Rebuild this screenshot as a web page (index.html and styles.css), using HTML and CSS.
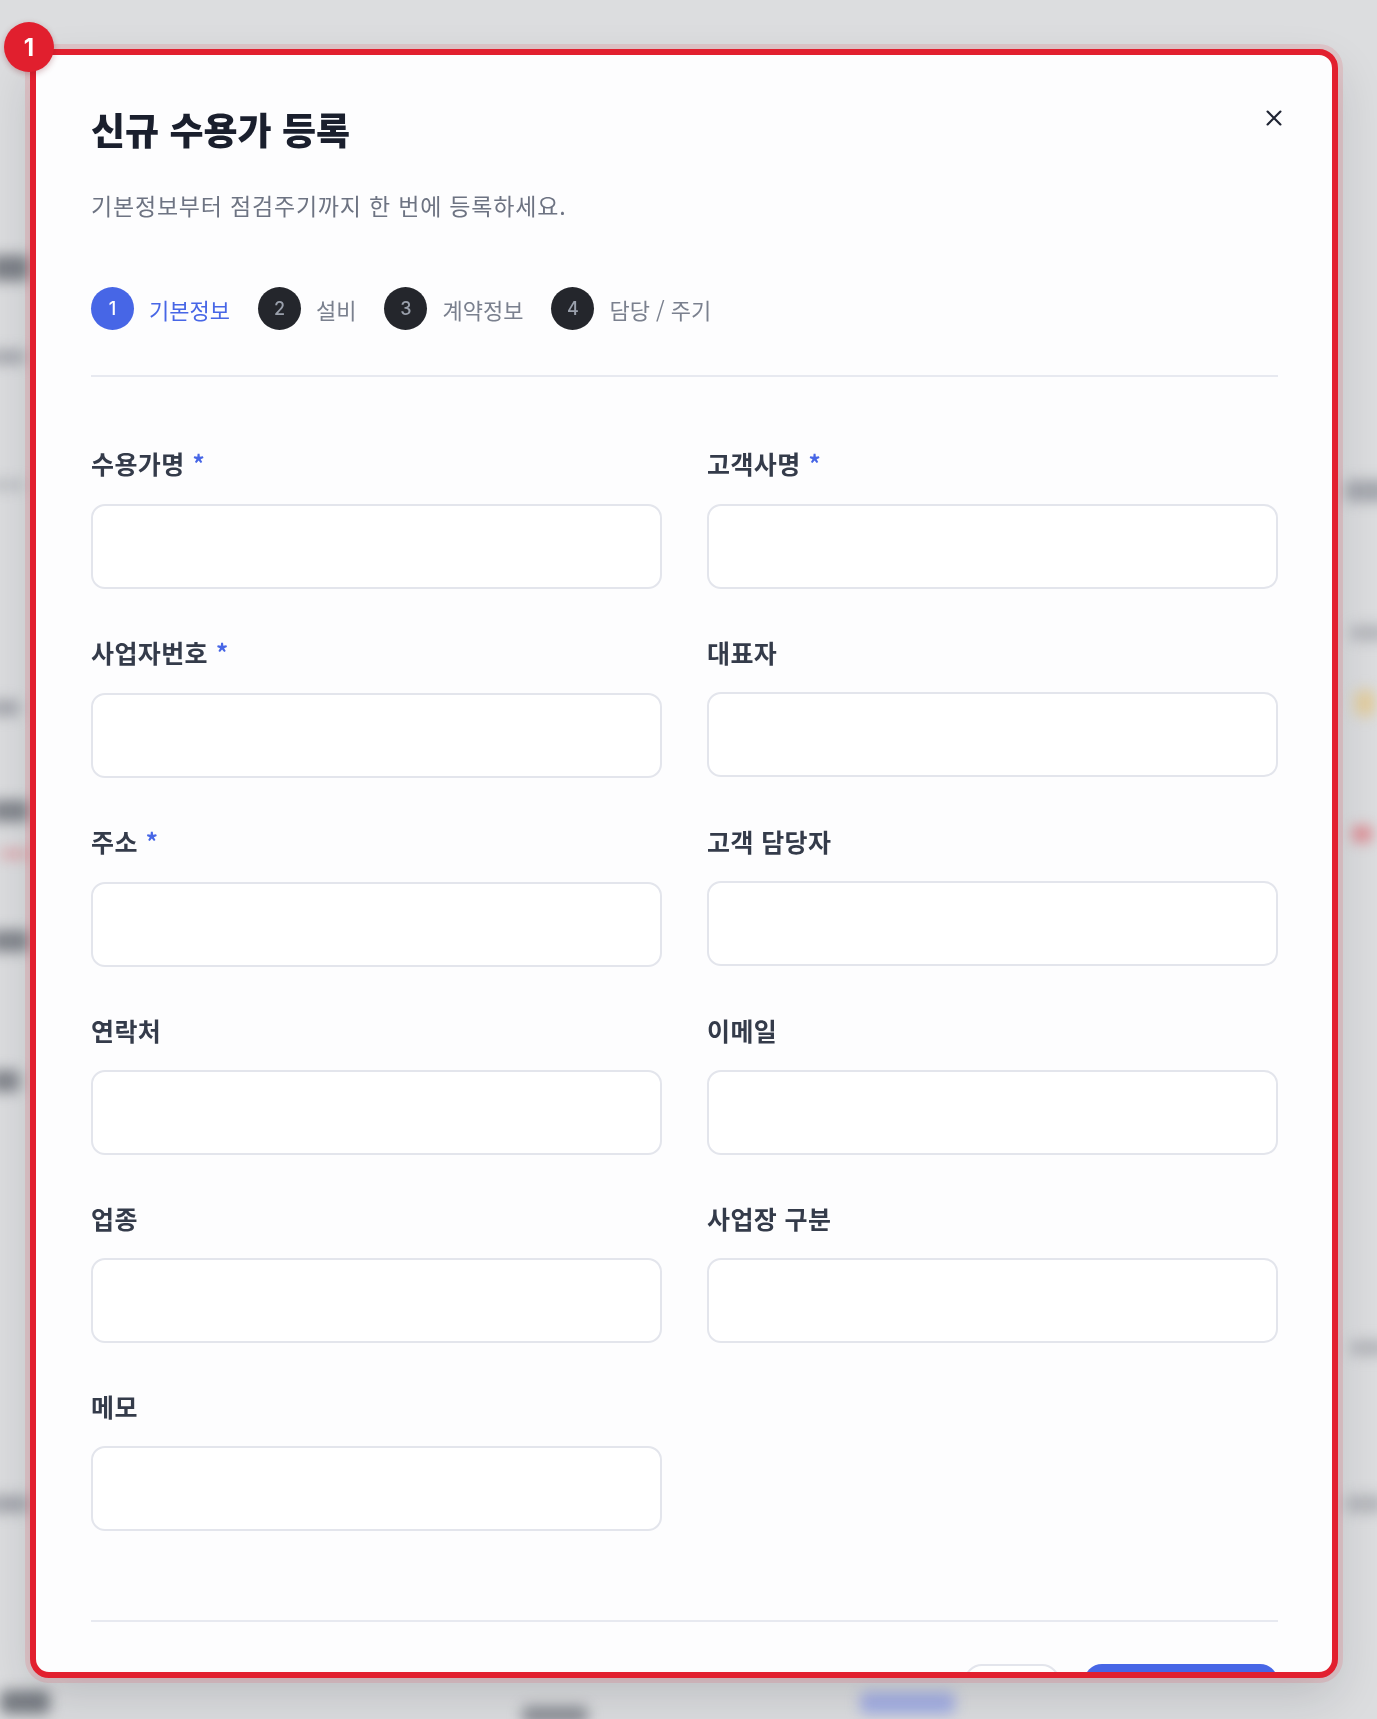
FILE: index.html
```html
<!DOCTYPE html>
<html lang="ko">
<head>
<meta charset="utf-8">
<title>신규 수용가 등록</title>
<link rel="stylesheet" href="styles.css">
</head>
<body>
<div class="backdrop" aria-hidden="true">
  <span class="blob b1"></span>
  <span class="blob b2"></span>
  <span class="blob b3"></span>
  <span class="blob b4"></span>
  <span class="blob b5 red"></span>
  <span class="blob b6"></span>
  <span class="blob b7"></span>
  <span class="blob b8"></span>
  <span class="blob b9"></span>
  <span class="blob r1"></span>
  <span class="blob r2"></span>
  <span class="blob r3 yellow"></span>
  <span class="blob r4 red"></span>
  <span class="blob r5"></span>
  <span class="blob r6"></span>
  <span class="blob f1"></span>
  <span class="blob f2 blue"></span>
  <span class="blob f3"></span>
</div>

<div class="stage">
  <section class="modal">
    <header class="modal-head">
      <div class="head-text">
        <h1 class="modal-title">신규 수용가 등록</h1>
        <p class="modal-sub">기본정보부터 점검주기까지 한 번에 등록하세요.</p>
      </div>
      <button class="close-btn" type="button" aria-label="닫기">
        <svg viewBox="0 0 24 24" width="22" height="22" fill="none" stroke="currentColor" stroke-width="2.4" stroke-linecap="round"><path d="M5 5L19 19M19 5L5 19"/></svg>
      </button>
    </header>

    <ol class="steps">
      <li class="step active"><span class="step-num">1</span><span class="step-label">기본정보</span></li>
      <li class="step"><span class="step-num">2</span><span class="step-label">설비</span></li>
      <li class="step"><span class="step-num">3</span><span class="step-label">계약정보</span></li>
      <li class="step"><span class="step-num">4</span><span class="step-label">담당 / 주기</span></li>
    </ol>

    <div class="divider"></div>

    <div class="form-grid">
      <label class="field"><span class="field-label">수용가명<span class="req">*</span></span><input class="field-input" type="text"></label>
      <label class="field"><span class="field-label">고객사명<span class="req">*</span></span><input class="field-input" type="text"></label>
      <label class="field"><span class="field-label">사업자번호<span class="req">*</span></span><input class="field-input" type="text"></label>
      <label class="field"><span class="field-label">대표자</span><input class="field-input" type="text"></label>
      <label class="field"><span class="field-label">주소<span class="req">*</span></span><input class="field-input" type="text"></label>
      <label class="field"><span class="field-label">고객 담당자</span><input class="field-input" type="text"></label>
      <label class="field"><span class="field-label">연락처</span><input class="field-input" type="text"></label>
      <label class="field"><span class="field-label">이메일</span><input class="field-input" type="text"></label>
      <label class="field"><span class="field-label">업종</span><input class="field-input" type="text"></label>
      <label class="field"><span class="field-label">사업장 구분</span><input class="field-input" type="text"></label>
      <label class="field"><span class="field-label">메모</span><input class="field-input" type="text"></label>
    </div>

    <footer class="modal-foot">
      <button class="btn btn-ghost" type="button" aria-label="취소"></button>
      <button class="btn btn-primary" type="button" aria-label="등록"></button>
    </footer>
  </section>
  <span class="badge">1</span>
</div>
</body>
</html>
```

FILE: styles.css
```css
* { box-sizing: border-box; }

html, body {
  margin: 0;
  padding: 0;
}

body {
  width: 1377px;
  height: 1719px;
  overflow: hidden;
  background: #dcdddf;
  font-family: "Noto Sans CJK KR", "Noto Sans", "Liberation Sans", sans-serif;
  position: relative;
}

/* blurred page behind the dialog */
.backdrop {
  position: absolute;
  inset: 0;
  filter: blur(7px);
  pointer-events: none;
}
.blob {
  position: absolute;
  display: block;
  background: #8d9098;
  border-radius: 6px;
  opacity: 0.7;
}
.blob.red { background: #e0606a; }
.blob.yellow { background: #e6c680; }
.blob.blue { background: #8b9be8; }
.b1 { left: -10px; top: 255px; width: 40px; height: 26px; background: #555a63; }
.b2 { left: -10px; top: 350px; width: 36px; height: 14px; }
.b3 { left: -10px; top: 480px; width: 36px; height: 10px; opacity: .4; }
.b4 { left: -10px; top: 700px; width: 30px; height: 16px; }
.b5 { left: 0; top: 850px; width: 30px; height: 8px; opacity: .5; }
.b6 { left: -10px; top: 800px; width: 40px; height: 22px; background: #5c616a; }
.b7 { left: -10px; top: 930px; width: 40px; height: 22px; background: #5c616a; }
.b8 { left: -10px; top: 1070px; width: 30px; height: 22px; background: #5c616a; }
.b9 { left: -10px; top: 1495px; width: 40px; height: 18px; }
.r1 { left: 1345px; top: 480px; width: 50px; height: 22px; }
.r2 { left: 1350px; top: 625px; width: 40px; height: 16px; opacity: .5; }
.r3 { left: 1355px; top: 690px; width: 20px; height: 26px; }
.r4 { left: 1352px; top: 826px; width: 20px; height: 16px; }
.r5 { left: 1350px; top: 1340px; width: 40px; height: 16px; opacity: .5; }
.r6 { left: 1345px; top: 1495px; width: 40px; height: 18px; opacity: .5; }
.f1 { left: 0; top: 1690px; width: 50px; height: 24px; background: #4f545c; }
.f2 { left: 860px; top: 1692px; width: 95px; height: 22px; }
.f3 { left: 522px; top: 1706px; width: 66px; height: 18px; background: #6a6e76; }

.stage {
  position: relative;
  padding: 52px 0 0 33px;
  width: 1377px;
}

.modal {
  width: 1302px;
  height: 1623px;
  overflow: hidden;
  background: #fdfdfe;
  border-radius: 16px;
  outline: 6px solid #e2202f;
  outline-offset: -3px;
  box-shadow: 0 0 0 8px rgba(228, 70, 80, 0.16), 0 20px 50px rgba(20, 24, 35, 0.16);
  padding: 55px 57px 0 58px;
}

.modal-head {
  display: flex;
  justify-content: space-between;
  align-items: flex-start;
}

.modal-title {
  margin: 0;
  font-size: 37px;
  line-height: 44px;
  font-weight: 800;
  color: #1a1f2d;
}

.modal-sub {
  margin: 38px 0 0;
  font-size: 23px;
  line-height: 32px;
  color: #6d7382;
  font-weight: 400;
  letter-spacing: 0.8px;
}

.close-btn {
  width: 30px;
  height: 30px;
  margin: -4px -11px 0 0;
  padding: 0;
  border: 0;
  background: transparent;
  color: #1f2433;
  display: flex;
  align-items: center;
  justify-content: center;
  cursor: pointer;
}

.steps {
  list-style: none;
  margin: 66px 0 0;
  padding: 0;
  display: flex;
  align-items: center;
  gap: 28px;
}

.step {
  display: flex;
  align-items: center;
  gap: 15px;
}

.step-num {
  width: 43px;
  height: 43px;
  border-radius: 50%;
  background: #24262c;
  color: #9aa0ac;
  display: flex;
  align-items: center;
  justify-content: center;
  font-family: "Inter", "Noto Sans", sans-serif;
  font-size: 18px;
  font-weight: 500;
}

.step-label {
  font-size: 22px;
  line-height: 28px;
  color: #7a808e;
}

.step.active .step-num {
  background: #4766e6;
  color: #ffffff;
}

.step.active .step-label {
  color: #4766e6;
}

.divider {
  margin-top: 45px;
  height: 2px;
  background: #e7e9f0;
}

.form-grid {
  margin-top: 70px;
  display: grid;
  grid-template-columns: 1fr 1fr;
  column-gap: 45px;
  row-gap: 47px;
}

.field {
  display: flex;
  flex-direction: column;
  gap: 24px;
}

.field-label {
  font-size: 25px;
  line-height: 32px;
  font-weight: 700;
  color: #343b4a;
  letter-spacing: 0.4px;
}

.req {
  color: #4766e6;
  font-size: 24px;
  font-weight: 700;
  margin-left: 8px;
  position: relative;
  top: -1px;
}

.field-input {
  height: 85px;
  width: 100%;
  border: 2px solid #e3e5ec;
  border-radius: 14px;
  background: #ffffff;
  font: inherit;
  font-size: 20px;
  padding: 0 20px;
  outline: none;
}

.modal-foot {
  margin-top: 89px;
  border-top: 2px solid #e7e9f0;
  padding-top: 42px;
  display: flex;
  justify-content: flex-end;
  gap: 24px;
}

.btn {
  height: 58px;
  border-radius: 18px;
  padding: 0;
}

.btn-ghost {
  width: 96px;
  background: #ffffff;
  border: 2px solid #e3e5ec;
}

.btn-primary {
  width: 194px;
  background: #4766e6;
  border: 0;
}

.badge {
  position: absolute;
  left: 4px;
  top: 22px;
  width: 50px;
  height: 50px;
  border-radius: 50%;
  background: #e11f2e;
  color: #ffffff;
  font-family: "Inter", "Noto Sans", sans-serif;
  font-weight: 700;
  font-size: 24px;
  display: flex;
  align-items: center;
  justify-content: center;
  box-shadow: 0 2px 6px rgba(120, 20, 30, 0.3);
}
```
